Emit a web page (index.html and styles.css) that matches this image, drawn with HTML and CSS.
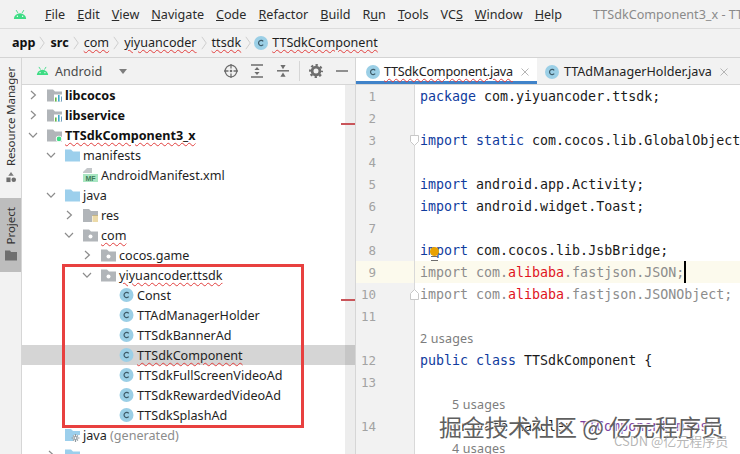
FILE: index.html
```html
<!DOCTYPE html>
<html lang="en">
<head>
<meta charset="utf-8">
<title>TTSdkComponent3_x</title>
<link rel="stylesheet" href="styles.css">
</head>
<body>
<svg class="defs" aria-hidden="true">
  <symbol id="android" viewBox="0 0 16 12"><path d="M1 11a7 6.4 0 0 1 14 0z" fill="#3ddc84"/><path d="M3.6 1l2 3.2M12.4 1l-2 3.2" stroke="#3ddc84" stroke-width="1.1" fill="none"/><circle cx="5" cy="8" r=".8" fill="#fff"/><circle cx="11" cy="8" r=".8" fill="#fff"/></symbol>
  <symbol id="cls" viewBox="0 0 14 14"><circle cx="7" cy="7" r="7" fill="#9bcfe6"/><path d="M9.2 5.400a2.600 2.600 0 1 0 0 3.200" fill="none" stroke="#3d5a68" stroke-width="1.200"/></symbol>
  <symbol id="chev-r" viewBox="0 0 10 10"><path d="M3 1l4.400 4L3 9" fill="none" stroke="#8c8c8c" stroke-width="1.200"/></symbol>
  <symbol id="chev-d" viewBox="0 0 10 10"><path d="M1 3l4 4.200L9 3" fill="none" stroke="#8c8c8c" stroke-width="1.200"/></symbol>
  <symbol id="folder-blue" viewBox="0 0 15 13"><path d="M0 1h6l2 2h7v10H0z" fill="#9ccfec"/></symbol>
  <symbol id="pkg" viewBox="0 0 15 13"><path d="M0 1h6l2 2h7v10H0z" fill="#b1b5b9"/><circle cx="7.500" cy="8" r="2" fill="#fff"/></symbol>
  <symbol id="module" viewBox="0 0 15 13"><path d="M0 1h6l2 2h7v10H0z" fill="#b1b5b9"/><path d="M7 6h8v7H7z" fill="#fff"/><path d="M8 9h1.600v4H8z" fill="#62b543"/><path d="M11 6.500h1.600V13H11z" fill="#40a9c9"/><path d="M14 8h1v5h-1z" fill="#6e9fbf"/></symbol>
  <symbol id="module-dot" viewBox="0 0 15 13"><path d="M0 1h6l2 2h7v10H0z" fill="#b1b5b9"/><circle cx="12" cy="10.400" r="3.200" fill="#fff"/><circle cx="12" cy="10.400" r="2.300" fill="#3ddc84"/></symbol>
  <symbol id="res" viewBox="0 0 15 14"><path d="M0 1h6l2 2h7v5H9v6H0z" fill="#b1b5b9"/><path d="M9.500 8h5.500M9.500 10h5.500M9.500 12h5.500M9.500 14h5.500" stroke="#d9b552" stroke-width="1.100"/></symbol>
  <symbol id="gen" viewBox="0 0 15 14"><path d="M0 1h6l2 2h7v4H8v6H0z" fill="#9ccfec"/><g stroke="#8f9aa0" stroke-width="1.200" fill="none"><circle cx="10.500" cy="10" r="1.500"/><path d="M10.500 6v2M10.500 12v2M6.500 10h2M12.500 10h2M8 7.500l1.200 1.200M13 12.500l-1.200-1.200M8 12.500l1.200-1.200M13 7.500l-1.200 1.200"/></g></symbol>
  <symbol id="mf" viewBox="0 0 15 14"><path d="M4 0h5v5H0V4z" fill="#c4c7ca"/><rect x="0" y="6" width="15" height="8" fill="#a9e6c2"/><text x="7.500" y="12.600" font-family="Liberation Sans, sans-serif" font-size="7" font-weight="700" text-anchor="middle" fill="#3d7a58">MF</text></symbol>
  <symbol id="fold-down" viewBox="0 0 9 11"><path d="M.5.500h8v6l-4 4-4-4z" fill="#fff" stroke="#c8c8c8"/></symbol>
  <symbol id="fold-up" viewBox="0 0 9 11"><path d="M.5 10.500h8v-6l-4-4-4 4z" fill="#fff" stroke="#c8c8c8"/></symbol>
</svg>

<header class="menubar">
  <svg class="menu-logo"><use href="#android"/></svg>
  <nav class="menus">
    <span><u>F</u>ile</span><span><u>E</u>dit</span><span><u>V</u>iew</span><span><u>N</u>avigate</span><span><u>C</u>ode</span><span><u>R</u>efactor</span><span><u>B</u>uild</span><span>R<u>u</u>n</span><span><u>T</u>ools</span><span>VC<u>S</u></span><span><u>W</u>indow</span><span><u>H</u>elp</span>
  </nav>
  <span class="wintitle">TTSdkComponent3_x - TTSdkComponent.java</span>
</header>

<div class="crumbs">
  <b>app</b><svg class="sep" viewBox="0 0 8 16"><path d="M1 1l5 7-5 7" fill="none" stroke="#c9c9c9"/></svg>
  <b>src</b><svg class="sep" viewBox="0 0 8 16"><path d="M1 1l5 7-5 7" fill="none" stroke="#c9c9c9"/></svg>
  <span class="typo">com</span><svg class="sep" viewBox="0 0 8 16"><path d="M1 1l5 7-5 7" fill="none" stroke="#c9c9c9"/></svg>
  <span class="typo">yiyuancoder</span><svg class="sep" viewBox="0 0 8 16"><path d="M1 1l5 7-5 7" fill="none" stroke="#c9c9c9"/></svg>
  <span class="typo">ttsdk</span><svg class="sep" viewBox="0 0 8 16"><path d="M1 1l5 7-5 7" fill="none" stroke="#c9c9c9"/></svg>
  <svg class="crumb-ic"><use href="#cls"/></svg><span class="typo">TTSdkComponent</span>
</div>

<main class="workspace">
  <aside class="rail">
    <div class="rail-item">
      <span class="vtext tight">Resource Manager</span>
      <svg class="rail-ic" viewBox="0 0 12 12"><path d="M6 0l3 4H3z" fill="#7a7a7a"/><rect x="1" y="6" width="4.500" height="5" fill="#6e6e6e"/><circle cx="9" cy="8.500" r="2.500" fill="#6e6e6e"/></svg>
    </div>
    <div class="rail-item active">
      <span class="vtext">Project</span>
      <svg class="rail-ic" viewBox="0 0 12 10"><path d="M0 0h5l1 1.500h6V10H0z" fill="#6e6e6e"/></svg>
    </div>
  </aside>

  <section class="project">
    <div class="proj-head">
      <svg class="proj-logo"><use href="#android"/></svg>
      <span class="proj-title">Android</span>
      <svg class="tri" viewBox="0 0 8 5"><path d="M0 0h8L4 5z" fill="#7d7d7d"/></svg>
      <span class="tools">
        <svg viewBox="0 0 14 14"><circle cx="7" cy="7" r="5.800" fill="none" stroke="#6e6e6e" stroke-width="1.300"/><circle cx="7" cy="7" r="1.300" fill="#6e6e6e"/><path d="M7 0v4.500M7 9.500V14M0 7h4.500M9.500 7H14" stroke="#6e6e6e" stroke-width="1.300"/></svg>
        <svg viewBox="0 0 14 14"><path d="M1 1h12M1 13h12" stroke="#6e6e6e" stroke-width="1.500"/><path d="M7 3l2.600 3H4.400zM7 11L4.400 8h5.200z" fill="#6e6e6e"/></svg>
        <svg viewBox="0 0 14 14"><path d="M1 6.800h12" stroke="#6e6e6e" stroke-width="1.500"/><path d="M7 5.200L4.400 1h5.200zM7 8.500l2.600 4.300H4.400z" fill="#6e6e6e"/></svg>
        <i class="tool-sep"></i>
        <svg viewBox="0 0 14 14"><circle cx="7" cy="7" r="3.900" fill="none" stroke="#6e6e6e" stroke-width="2.800"/><circle cx="7" cy="7" r="6" fill="none" stroke="#6e6e6e" stroke-width="2" stroke-dasharray="2.360 2.352" stroke-dashoffset="1.180"/></svg>
        <svg viewBox="0 0 14 14"><path d="M1 7h12" stroke="#6e6e6e" stroke-width="1.500"/></svg>
      </span>
    </div>
    <div class="tree">
      <div class="row l0"><svg class="chev"><use href="#chev-r"/></svg><svg class="ic"><use href="#module"/></svg><b>libcocos</b></div>
      <div class="row l0"><svg class="chev"><use href="#chev-r"/></svg><svg class="ic"><use href="#module"/></svg><b>libservice</b></div>
      <div class="row l0"><svg class="chev"><use href="#chev-d"/></svg><svg class="ic"><use href="#module-dot"/></svg><b class="typo">TTSdkComponent3_x</b></div>
      <div class="row l1"><svg class="chev"><use href="#chev-d"/></svg><svg class="ic"><use href="#folder-blue"/></svg><span>manifests</span></div>
      <div class="row l2"><i class="chev"></i><svg class="ic"><use href="#mf"/></svg><span>AndroidManifest.xml</span></div>
      <div class="row l1"><svg class="chev"><use href="#chev-d"/></svg><svg class="ic"><use href="#folder-blue"/></svg><span>java</span></div>
      <div class="row l2"><svg class="chev"><use href="#chev-r"/></svg><svg class="ic"><use href="#res"/></svg><span>res</span></div>
      <div class="row l2"><svg class="chev"><use href="#chev-d"/></svg><svg class="ic"><use href="#pkg"/></svg><span class="typo">com</span></div>
      <div class="row l3"><svg class="chev"><use href="#chev-r"/></svg><svg class="ic"><use href="#pkg"/></svg><span>cocos.game</span></div>
      <div class="row l3"><svg class="chev"><use href="#chev-d"/></svg><svg class="ic"><use href="#pkg"/></svg><span class="typo">yiyuancoder.ttsdk</span></div>
      <div class="row l4"><i class="chev"></i><svg class="ic"><use href="#cls"/></svg><span>Const</span></div>
      <div class="row l4"><i class="chev"></i><svg class="ic"><use href="#cls"/></svg><span>TTAdManagerHolder</span></div>
      <div class="row l4"><i class="chev"></i><svg class="ic"><use href="#cls"/></svg><span>TTSdkBannerAd</span></div>
      <div class="row l4 selected"><i class="chev"></i><svg class="ic"><use href="#cls"/></svg><span class="typo">TTSdkComponent</span></div>
      <div class="row l4"><i class="chev"></i><svg class="ic"><use href="#cls"/></svg><span>TTSdkFullScreenVideoAd</span></div>
      <div class="row l4"><i class="chev"></i><svg class="ic"><use href="#cls"/></svg><span>TTSdkRewardedVideoAd</span></div>
      <div class="row l4"><i class="chev"></i><svg class="ic"><use href="#cls"/></svg><span>TTSdkSplashAd</span></div>
      <div class="row l1"><i class="chev"></i><svg class="ic"><use href="#gen"/></svg><span>java <em>(generated)</em></span></div>
      <div class="row l1"><svg class="chev"><use href="#chev-r"/></svg><svg class="ic"><use href="#folder-blue"/></svg></div>
      <div class="scrollbar"><i class="mark m1"></i><i class="mark m2"></i></div>
      <div class="callout"></div>
    </div>
  </section>

  <section class="editor">
    <div class="tabs">
      <div class="tab active"><svg class="ic"><use href="#cls"/></svg><span class="typo">TTSdkComponent.java</span><svg class="close" viewBox="0 0 8 8"><path d="M.5.5l7 7M7.500.5l-7 7" stroke="#b5b5b5"/></svg></div>
      <div class="tab second"><svg class="ic"><use href="#cls"/></svg><span>TTAdManagerHolder.java</span><svg class="close" viewBox="0 0 8 8"><path d="M.5.5l7 7M7.500.5l-7 7" stroke="#b5b5b5"/></svg></div>
    </div>
    <div class="code">
      <div class="line"><span class="num">1</span><code><s>package</s> com.yiyuancoder.ttsdk;</code></div>
      <div class="line"><span class="num">2</span><code></code></div>
      <div class="line"><span class="num">3</span><code><s>import static</s> com.cocos.lib.GlobalObject.*;</code><svg class="fold"><use href="#fold-down"/></svg></div>
      <div class="line"><span class="num">4</span><code></code></div>
      <div class="line"><span class="num">5</span><code><s>import</s> android.app.Activity;</code></div>
      <div class="line"><span class="num">6</span><code><s>import</s> android.widget.Toast;</code></div>
      <div class="line"><span class="num">7</span><code></code></div>
      <div class="line"><span class="num">8</span><code><s>import</s> com.cocos.lib.JsbBridge;</code><i class="bulb"></i></div>
      <div class="line current"><span class="num">9</span><code class="unused">import com.<mark>alibaba</mark>.fastjson.JSON;<i class="caret"></i></code></div>
      <div class="line"><span class="num">10</span><code class="unused">import com.<mark>alibaba</mark>.fastjson.JSONObject;</code><svg class="fold"><use href="#fold-up"/></svg></div>
      <div class="line"><span class="num">11</span><code></code></div>
      <div class="line"><span class="num"></span><span class="hint">2 usages</span></div>
      <div class="line"><span class="num">12</span><code><s>public class</s> TTSdkComponent {</code></div>
      <div class="line"><span class="num">13</span><code></code></div>
      <div class="line"><span class="num"></span><span class="hint indent">5 usages</span></div>
      <div class="line"><span class="num">14</span><code class="indent">private Handler <var>TTComponent mInst</var>;</code></div>
      <div class="line"><span class="num"></span><span class="hint indent">4 usages</span></div>
    </div>
  </section>
</main>

<div class="watermark">掘金技术社区 @ 亿元程序员</div>
<div class="csdn">CSDN @亿元程序员</div>
</body>
</html>
```
FILE: styles.css
```css
* { box-sizing: border-box; }
html, body { margin: 0; height: 100%; }
body {
  position: relative;
  width: 740px;
  height: 454px;
  overflow: hidden;
  background: #fff;
  color: #1f1f1f;
  font: 12.600px/20px "Noto Sans", sans-serif;
  display: flex;
  flex-direction: column;
}
.defs { position: absolute; width: 0; height: 0; }
svg { display: block; flex: none; }

.menubar {
  height: 29px;
  flex: none;
  background: #f2f2f2;
  border-bottom: 1px solid #dcdcdc;
  padding-top: 1px;
  display: flex;
  align-items: center;
  white-space: nowrap;
  overflow: hidden;
}
.menu-logo { width: 14px; height: 11px; margin-left: 13px; }
.menus { display: flex; gap: 12px; margin-left: 18px; color: #2b2b2b; }
.wintitle { margin-left: 31px; color: #8a8a8a; }

.crumbs {
  height: 29px;
  flex: none;
  background: #f2f2f2;
  border-bottom: 1px solid #d4d4d4;
  padding: 0 0 1px 12px;
  display: flex;
  align-items: center;
  gap: 4px;
  white-space: nowrap;
}
.crumbs b { color: #111; }
.sep { width: 7px; height: 16px; }
.crumb-ic { width: 14px; height: 14px; margin-left: -2px; }
.typo {
  text-decoration: underline wavy #e2403f 1px;
  text-underline-offset: 2px;
}

.workspace { flex: 1; min-height: 0; display: flex; }

.rail {
  width: 22px;
  flex: none;
  background: #f2f2f2;
  border-right: 1px solid #d6d6d6;
  display: flex;
  flex-direction: column;
  align-items: stretch;
  color: #333;
  font-size: 11.500px;
}
.rail-item {
  display: flex;
  flex-direction: column;
  align-items: center;
  gap: 6px;
  padding-top: 9px;
  height: 140px;
}
.rail-item.active {
  background: #bdbdbd;
  height: 74px;
  gap: 5px;
  padding-top: 9px;
}
.vtext { writing-mode: vertical-rl; transform: rotate(180deg); line-height: 14px; }
.tight { letter-spacing: -.15px; }
.rail-ic { width: 12px; height: 11px; }

.project {
  width: 334px;
  flex: none;
  display: flex;
  flex-direction: column;
  border-right: 1px solid #d6d6d6;
}
.proj-head {
  height: 27px;
  flex: none;
  background: #f2f2f2;
  border-bottom: 1px solid #d6d6d6;
  display: flex;
  align-items: center;
  padding-left: 14px;
  color: #4a4a4a;
}
.proj-logo { width: 13px; height: 10px; }
.proj-title { margin: 2px 0 0 6px; }
.tri { width: 8px; height: 5px; margin-left: 17px; }
.tools { margin-left: auto; margin-right: 6px; display: flex; align-items: center; gap: 12px; }
.tools svg { width: 14px; height: 14px; }
.tool-sep { width: 1px; height: 20px; background: #d6d6d6; margin: 0 -3px; }

.tree { position: relative; flex: 1; min-height: 0; overflow: hidden; }
.row { height: 20px; display: flex; align-items: center; white-space: nowrap; }
.row span, .row b { margin-top: 2px; }
.row b { font-weight: 700; color: #111; }
.row em { font-style: normal; color: #8c8c8c; }
.l0 { padding-left: 6px; }
.l1 { padding-left: 24px; }
.l2 { padding-left: 42px; }
.l3 { padding-left: 60px; }
.l4 { padding-left: 78px; }
.chev { width: 10px; height: 10px; flex: none; margin-right: 9px; }
.ic { width: 15px; height: 14px; margin-right: 3px; }
.selected { background: #d5d5d5; }
.scrollbar { position: absolute; top: 0; bottom: 0; right: 0; width: 10px; background: rgba(0, 0, 0, .07); }
.mark { position: absolute; right: 0; width: 14px; height: 1.500px; background: #c9555a; }
.m1 { top: 38px; }
.m2 { top: 214px; }
.callout { position: absolute; left: 40px; top: 179px; width: 242px; height: 164px; border: 3px solid #e8403f; }

.editor { flex: 1; min-width: 0; display: flex; flex-direction: column; }
.tabs {
  height: 27px;
  flex: none;
  background: #f2f2f2;
  border-bottom: 1px solid #d6d6d6;
  display: flex;
  white-space: nowrap;
  overflow: hidden;
}
.tab { display: flex; align-items: center; padding: 1px 8px 0 10px; color: #222; }
.tab span { margin-top: 1px; }
.tab .ic { width: 14px; height: 14px; margin-right: 4px; }
.tab.second { padding-left: 8px; }
.tab.second .ic { margin-right: 5px; }
.tab.active { background: #fff; box-shadow: inset 0 -3px 0 #4083c9; }
.tab.active span { letter-spacing: -.2px; }
.close { width: 8px; height: 8px; margin-left: 8px; }

.code { flex: 1; min-height: 0; overflow: hidden; font: 13.300px/24px "DejaVu Sans Mono", monospace; }
.line { position: relative; height: 22px; display: flex; }
.num {
  width: 59px;
  height: 22px;
  flex: none;
  background: #f2f2f2;
  border-right: 1px solid #d9d9d9;
  color: #a3a3a3;
  padding-right: 38px;
  text-align: right;
  font: 12.500px/24px "DejaVu Sans Mono", monospace;
}
.line code { font: inherit; padding-left: 5px; white-space: pre; color: #1a1a1a; }
.line s { text-decoration: none; color: #0f3c9e; }
.line code.indent, .hint.indent { padding-left: 37px; }
.line var { font-style: normal; color: #7a3e9d; }
.line mark { background: none; color: #e0141e; }
.line code.unused { color: #8c8c8c; }
.hint { padding-left: 5px; font: 12.500px/24px "Noto Sans", sans-serif; color: #7d7d7d; letter-spacing: .2px; }
.current { background: #fcfaed; }
.current .num { background: #fcfaed; }
.caret { display: inline-block; width: 2px; height: 22px; background: #000; vertical-align: top; }
.fold { position: absolute; left: 54px; top: 6px; width: 9px; height: 11px; }
.bulb {
  position: absolute;
  left: 74px;
  top: 8px;
  width: 9px;
  height: 9px;
  border-radius: 50%;
  background: #e8a100;
}
.bulb::after {
  content: "";
  position: absolute;
  left: 1px;
  top: 9px;
  width: 7px;
  height: 3px;
  border-top: 1px solid #6e6e6e;
  border-bottom: 1px solid #6e6e6e;
}

.watermark {
  position: absolute;
  left: 439px;
  top: 412px;
  font: 23px/28px "Noto Sans CJK SC", sans-serif;
  color: #5f5f5f;
  white-space: nowrap;
  text-shadow: 1px 1px 1px #fff, -1px -1px 1px #fff;
}
.csdn {
  position: absolute;
  left: 614px;
  top: 432px;
  font: 13px/18px "Noto Sans CJK SC", sans-serif;
  color: rgba(150, 150, 150, .7);
  white-space: nowrap;
}
```
